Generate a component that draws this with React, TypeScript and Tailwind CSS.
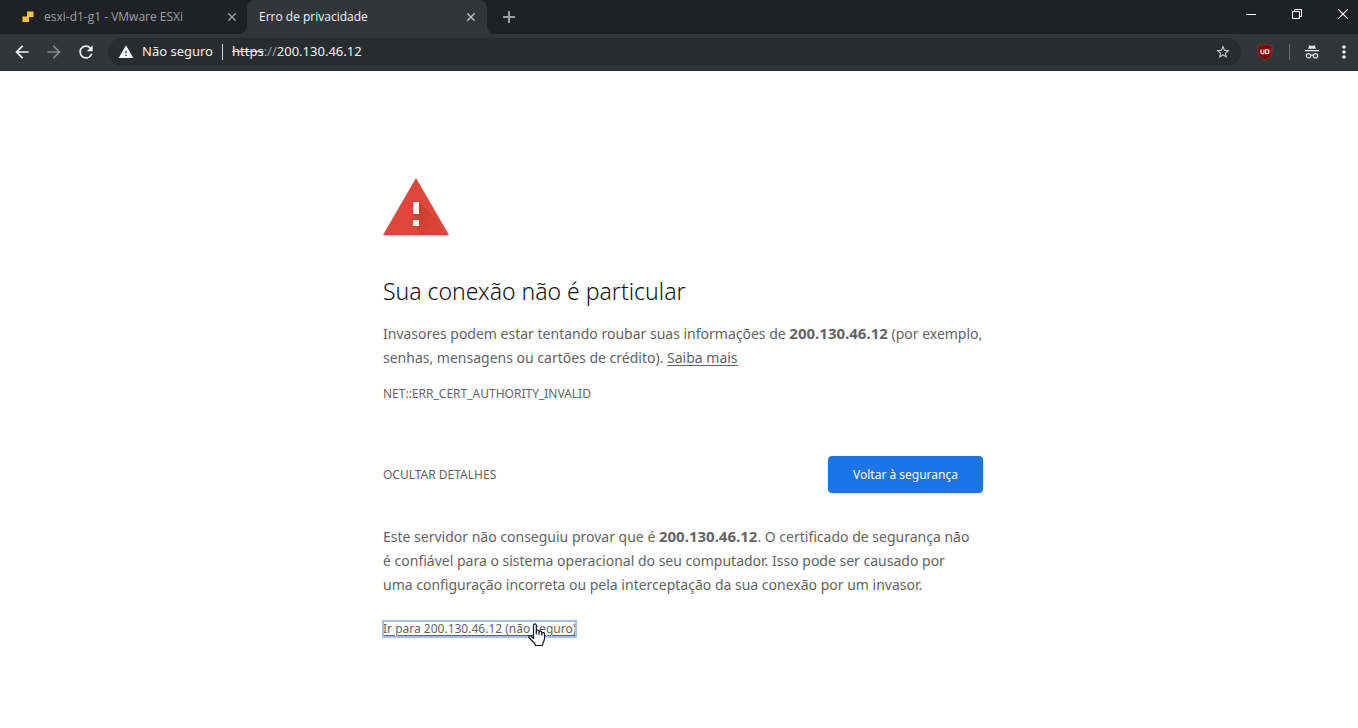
import React from "react";
import { MdArrowBack, MdArrowForward, MdRefresh, MdWarning, MdStarBorder, MdMoreVert } from "react-icons/md";

function Cross({ className }: { className: string }) {
  return (
    <svg viewBox="0 0 8 8" className={className} stroke="currentColor" fill="none" aria-hidden="true">
      <path d="M0.3 0.3 7.7 7.7M7.7 0.3 0.3 7.7" strokeWidth="1.4" />
    </svg>
  );
}

function TabBar() {
  return (
    <header className="flex h-[34px] overflow-hidden bg-[#202124] text-xs text-[#9aa0a6]">
      <div className="flex w-[247px] shrink-0 items-center pl-[22px] pr-[11px]">
        <svg viewBox="0 0 12 12" className="h-3 w-3 shrink-0" aria-hidden="true">
          <path d="M5 0.5h6.5V6H5z" fill="#f6cb3b" />
          <path d="M0.5 5.5H7V11H0.5z" fill="#f8c727" />
          <path d="M5 5.5h2V6H5z" fill="#fff1ad" />
          <path d="M5.5 1h1v4.500h-1z" fill="#dfa71e" />
        </svg>
        <span className="ml-[10px] flex-1 whitespace-nowrap">esxi-d1-g1 - VMware ESXi</span>
        <button aria-label="Fechar esxi-d1-g1" className="shrink-0"><Cross className="h-2 w-2" /></button>
      </div>
      <div className="relative flex w-60 shrink-0 items-center rounded-t-lg bg-[#323639] pl-3 pr-3 text-[#f1f3f4]">
        <svg viewBox="0 0 8 8" className="absolute bottom-0 -left-2 h-2 w-2" aria-hidden="true"><path d="M8 0v8H0a8 8 0 0 0 8-8" fill="#323639" /></svg>
        <svg viewBox="0 0 8 8" className="absolute bottom-0 -right-2 h-2 w-2" aria-hidden="true"><path d="M0 0v8h8a8 8 0 0 1-8-8" fill="#323639" /></svg>
        <span className="flex-1 whitespace-nowrap">Erro de privacidade</span>
        <button aria-label="Fechar Erro de privacidade" className="text-[#bdc1c6]"><Cross className="h-2 w-2" /></button>
      </div>
      <button aria-label="Nova guia" className="ml-4 flex items-center">
        <svg viewBox="0 0 12 12" className="h-3 w-3" stroke="currentColor" strokeWidth="2"><path d="M6 0v12M0 6h12" /></svg>
      </button>
      <div className="-mr-2 ml-auto flex h-7 text-white">
        <button aria-label="Minimizar" className="flex w-[46px] items-center justify-center">
          <svg viewBox="0 0 10 10" className="h-[10px] w-[10px]" stroke="currentColor"><path d="M0 5.500h10" /></svg>
        </button>
        <button aria-label="Restaurar" className="flex w-[46px] items-center justify-center">
          <svg viewBox="0 0 10 10" className="h-[10px] w-[10px]" stroke="currentColor" fill="none"><path d="M0.500 2.500h7v7h-7zM2.500 2.500v-2h7v7h-2" /></svg>
        </button>
        <button aria-label="Fechar janela" className="flex w-[46px] items-center justify-center">
          <svg viewBox="0 0 10 10" className="h-[10px] w-[10px]" stroke="currentColor"><path d="M0 0l10 10M10 0 0 10" strokeWidth="1.1" /></svg>
        </button>
      </div>
    </header>
  );
}

function Toolbar() {
  return (
    <nav className="flex h-[37px] items-center overflow-hidden border-b border-[#27292b] bg-[#323639] pl-3 text-[#f1f3f4]">
      <div className="flex shrink-0 gap-3">
        <button aria-label="Voltar"><MdArrowBack className="h-5 w-5" /></button>
        <button aria-label="Avançar" className="text-[#85888b]"><MdArrowForward className="h-5 w-5" /></button>
        <button aria-label="Recarregar"><MdRefresh className="h-5 w-5" /></button>
      </div>
      <div className="ml-3 flex h-7 min-w-0 flex-1 items-center rounded-full bg-[#282c2f] pl-[10px] pr-[10px] font-['Noto_Sans',sans-serif] text-[13px]">
        <MdWarning className="h-4 w-4 shrink-0" />
        <span className="ml-2 whitespace-nowrap">Não seguro</span>
        <span className="mx-[9px] h-4 w-px shrink-0 bg-[#dadce0]" />
        <div role="textbox" aria-label="Barra de endereço" contentEditable suppressContentEditableWarning className="flex-1 whitespace-nowrap outline-none">
          <span className="line-through">https</span><span className="text-[#9aa0a6]">://</span>200.130.46.12
        </div>
        <button aria-label="Adicionar aos favoritos" className="shrink-0 text-[#d0d3d6]"><MdStarBorder className="h-4 w-4" /></button>
      </div>
      <button aria-label="uBlock" className="ml-4 shrink-0">
        <svg viewBox="0 0 16 16" className="h-4 w-4">
          <path d="M8 0.300C6.300 1.300 3.600 1.700 1 1.800V8c0 4 2.600 5.900 7 7.800 4.400-1.900 7-3.800 7-7.800V1.800C12.400 1.700 9.700 1.300 8 0.300" fill="#800000" stroke="#a34c4c" strokeWidth="0.500" />
          <path d="M4 5.500v3c0 .8.500 1.300 1.500 1.300s1.500-.5 1.500-1.300v-3M8.700 5.500v4.200h1.200c1.300 0 2.100-.8 2.100-2.100s-.8-2.100-2.100-2.100z" fill="none" stroke="#fff" strokeWidth="1.200" />
        </svg>
      </button>
      <span className="ml-4 h-4 w-px shrink-0 bg-[#6a6d70]" />
      <button aria-label="Navegação anônima" className="ml-[14px] shrink-0">
        <svg viewBox="0 0 16 16" className="h-4 w-4" fill="#e3e5e8">
          <path d="M5.300 1.200 8 1.900l2.700-.7 1.200 3.600H4.100zM1 6h14v1.300H1z" />
          <g fill="none" stroke="#e3e5e8" strokeWidth="1.200">
            <circle cx="4.500" cy="11.800" r="2.200" /><circle cx="11.500" cy="11.800" r="2.200" /><path d="M6.700 11.500q1.300-.9 2.600 0" />
          </g>
        </svg>
      </button>
      <button aria-label="Mais opções" className="ml-[14px] mr-1 shrink-0"><MdMoreVert className="h-5 w-5" /></button>
    </nav>
  );
}

function DangerIcon() {
  return (
    <svg viewBox="0 0 66 57" className="h-[57px] w-[66px]" role="img" aria-label="Aviso">
      <defs>
        <linearGradient id="shade" x1="0" y1="0" x2="1" y2="1">
          <stop offset="0" stopColor="#b93527" stopOpacity="0.800" />
          <stop offset="1" stopColor="#d64435" stopOpacity="0.200" />
        </linearGradient>
      </defs>
      <path d="M33 0 66 57H0z" fill="#df4738" />
      <path d="M36 24 53 41 62 57H39L30 48 36 42 30 36 36 30z" fill="url(#shade)" />
      <path d="M30 24h6v12h-6zM30 42h6v6h-6z" fill="#fff" />
    </svg>
  );
}

export default function App() {
  return (
    <div className="relative min-h-screen overflow-hidden bg-white font-['Open_Sans','Noto_Sans',sans-serif]">
      <TabBar />
      <Toolbar />
      <main className="pt-[107px] pl-2 font-['Noto_Sans',sans-serif] text-[#646464]">
        <div className="mx-auto max-w-[600px] text-sm leading-6">
          <DangerIcon />
          <h1 className="mt-10 text-[23px] leading-8 font-light text-[#111]">Sua conexão não é particular</h1>
          <p className="mt-[15px]">
            Invasores podem estar tentando roubar suas informações de <strong className="text-[15px] leading-4">200.130.46.12</strong> (por exemplo,
            <br />senhas, mensagens ou cartões de crédito). <a href="#mais" className="underline underline-offset-2">Saiba mais</a>
          </p>
          <p className="mt-[14px] text-xs leading-5">NET::ERR_CERT_AUTHORITY_INVALID</p>
          <div className="mt-[52px] flex items-center justify-between">
            <button className="pt-px text-xs">OCULTAR DETALHES</button>
            <button className="h-[37px] w-[155px] rounded bg-[#1d73e8] pt-px text-xs text-white">Voltar à segurança</button>
          </div>
          <p className="mt-8">
            Este servidor não conseguiu provar que é <strong className="text-[15px] leading-4">200.130.46.12</strong>. O certificado de segurança não
            <br />é confiável para o sistema operacional do seu computador. Isso pode ser causado por
            <br />uma configuração incorreta ou pela interceptação da sua conexão por um invasor.
          </p>
          <div className="mt-6 flex">
            <a href="#continuar" className="relative text-xs leading-4 underline underline-offset-2 outline-2 -outline-offset-1 outline-[#9fc1fb]">
              Ir para 200.130.46.12 (não seguro)
              <svg viewBox="0 0 18 24" className="absolute top-[2px] right-[30px] h-6 w-[18px]" aria-hidden="true">
                <path d="M5.500 16V2.200C5.500.3 8.300.3 8.300 2.200V8c0-1.500 2.700-1.300 2.700.3V9c.2-1.300 2.800-1.100 2.800.4v.8c.4-1.200 2.700-.8 2.700.8v4.500c0 2-1 3-1.500 4.500L14.500 22.500H7.500L6.800 20.500 1 14.800C.2 13.500 1.800 12.200 3 13.200L5.500 15.500" fill="#fff" stroke="#161b2b" strokeWidth="1.200" strokeLinejoin="round" />
                <path d="M8.300 8v3.500M11 9v3M13.800 10v2.500" fill="none" stroke="#161b2b" strokeWidth="1.200" />
              </svg>
            </a>
          </div>
        </div>
      </main>
    </div>
  );
}
